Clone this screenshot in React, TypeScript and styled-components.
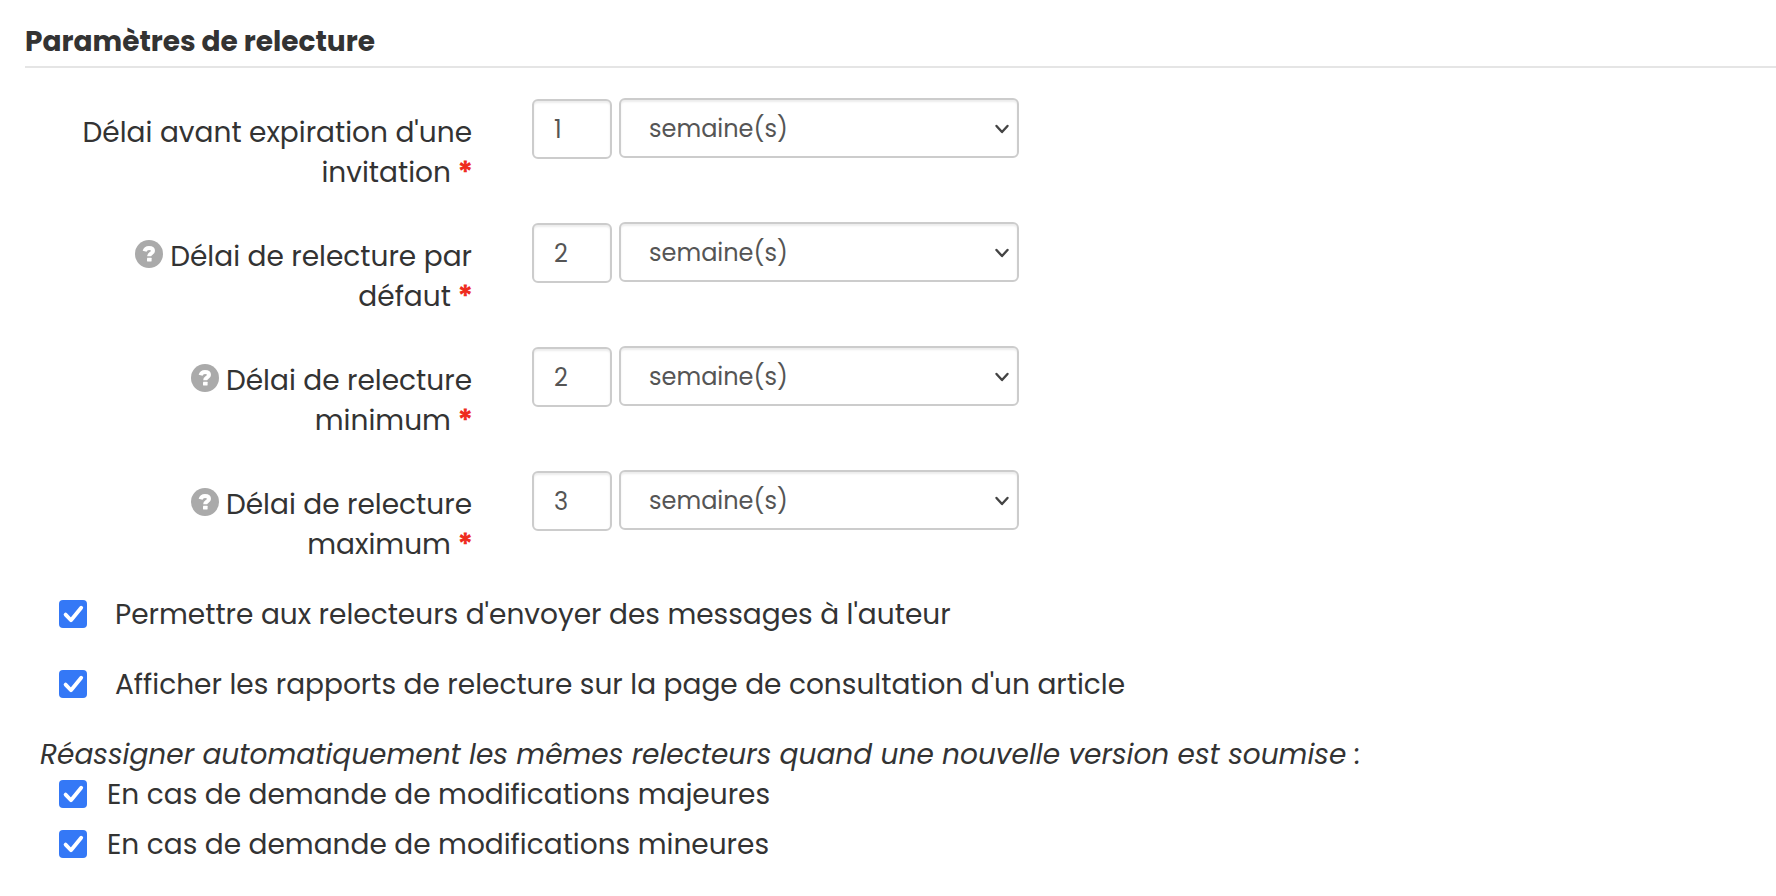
import React from 'react';
import styled, { createGlobalStyle } from 'styled-components';

const GlobalStyle = createGlobalStyle`
  *, *::before, *::after { box-sizing: border-box; }
  body {
    margin: 0;
    background: #fff;
    color: #333;
    font-family: Poppins, Inter, sans-serif;
    font-size: 28px;
    line-height: 40px;
  }
`;

const Form = styled.form`
  padding: 22px 0 0 25px;
`;

const Section = styled.fieldset`
  margin: 0;
  padding: 0;
  border: 0;
  min-width: 0;
`;

const Title = styled.legend`
  display: block;
  width: 100%;
  margin: 0 0 30px;
  padding: 0 0 4px;
  border-bottom: 2px solid #e5e5e5;
  font-weight: 700;
`;

const Delays = styled.div`
  display: grid;
  row-gap: 29px;
  margin-bottom: 30px;
`;

const Row = styled.div`
  display: flex;
  align-items: flex-start;
  gap: 60px;
`;

const RowLabel = styled.label`
  width: 447px;
  padding: 15px 0 0 47px;
  text-align: right;
`;

const KeepTogether = styled.span`
  white-space: nowrap;
`;

const Required = styled.span`
  color: #ee2c1b;
  -webkit-text-stroke: 1px #ee2c1b;
`;

const Help = styled.svg`
  width: 28px;
  height: 28px;
  margin-right: 7px;
  vertical-align: -2px;
`;

const Controls = styled.div`
  display: flex;
  align-items: flex-start;
  gap: 7px;
`;

const fieldStyle = `
  height: 60px;
  margin: 0;
  border: 2px solid #ccc;
  border-radius: 6px;
  background: #fff;
  box-shadow: inset 0 2px 2px rgba(0, 0, 0, 0.075);
  color: #555;
  font-family: inherit;
  font-size: 24px;
  line-height: 40px;
`;

const NumberField = styled.input`
  ${fieldStyle}
  width: 80px;
  margin-top: 1px;
  padding: 0 20px;
`;

const SelectBox = styled.span`
  position: relative;
  display: block;
`;

const UnitSelect = styled.select`
  ${fieldStyle}
  display: block;
  width: 400px;
  padding: 2px 40px 0 28px;
  appearance: none;
`;

const Chevron = styled.svg`
  position: absolute;
  top: 26px;
  right: 9px;
  width: 16px;
  height: 10px;
  pointer-events: none;
`;

const CheckLabel = styled.label<{ $gap: number; $after: number }>`
  display: flex;
  align-items: flex-start;
  gap: ${(p) => p.$gap}px;
  margin: 0 0 ${(p) => p.$after}px 34px;
`;

const Checkbox = styled.input`
  appearance: none;
  flex: none;
  width: 28px;
  height: 28px;
  margin: 5px 0 0;
  border-radius: 4px;
  background: #fff;
  border: 2px solid #b5b5b5;

  &:checked {
    background: #3478f6;
    border: 0;
  }
`;

const CheckWrap = styled.span`
  position: relative;
  display: flex;
`;

const Tick = styled.svg`
  position: absolute;
  left: 0;
  top: 5px;
  width: 28px;
  height: 28px;
  pointer-events: none;

  input:not(:checked) + & { display: none; }
`;

const Note = styled.p`
  margin: 0 0 0 15px;
  font-style: italic;
`;

const delays = [
  { id: 'invitation', label: "Délai avant expiration d'une", last: 'invitation', value: 1, help: false },
  { id: 'default', label: 'Délai de relecture par', last: 'défaut', value: 2, help: true },
  { id: 'minimum', label: 'Délai de relecture', last: 'minimum', value: 2, help: true },
  { id: 'maximum', label: 'Délai de relecture', last: 'maximum', value: 3, help: true },
];

function HelpIcon() {
  return (
    <Help viewBox="0 0 28 28" aria-hidden="true">
      <circle cx="14" cy="14" r="14" fill="#aaa" />
      <path
        d="M9.6 11.2C10.2 9 11.8 8 14 8c2.5 0 4 1.2 4 3 0 2.5-3.8 2.4-3.8 5.2"
        fill="none"
        stroke="#fff"
        strokeWidth="4"
      />
      <rect x="12" y="17.8" width="4.6" height="3.6" rx="0.4" fill="#fff" />
    </Help>
  );
}

function Delay({ id, label, last, value, help }: (typeof delays)[number]) {
  return (
    <Row>
      <RowLabel htmlFor={id}>
        {help && <HelpIcon />}
        <span>{label}</span>{' '}
        <KeepTogether>
          <span>{last}</span> <Required>*</Required>
        </KeepTogether>
      </RowLabel>
      <Controls>
        <NumberField id={id} type="text" inputMode="numeric" defaultValue={value} />
        <SelectBox>
          <UnitSelect aria-label={`${label} ${last}`} defaultValue="week">
            <option value="day">jour(s)</option>
            <option value="week">semaine(s)</option>
            <option value="month">mois</option>
          </UnitSelect>
          <Chevron viewBox="0 0 16 10" aria-hidden="true">
            <path d="M2.5 2L8 8l5.5-6" fill="none" stroke="#444" strokeWidth="2.4" strokeLinecap="round" strokeLinejoin="round" />
          </Chevron>
        </SelectBox>
      </Controls>
    </Row>
  );
}

function Check({ children, gap, after }: { children: React.ReactNode; gap: number; after: number }) {
  return (
    <CheckLabel $gap={gap} $after={after}>
      <CheckWrap>
        <Checkbox type="checkbox" defaultChecked />
        <Tick viewBox="0 0 28 28" aria-hidden="true">
          <path d="M6.6 14.6l5.4 5.6L22.2 7.8" fill="none" stroke="#fff" strokeWidth="3.8" strokeLinecap="round" strokeLinejoin="round" />
        </Tick>
      </CheckWrap>
      <span>{children}</span>
    </CheckLabel>
  );
}

export default function App() {
  return (
    <>
      <GlobalStyle />
      <Form>
        <Section>
          <Title>Paramètres de relecture</Title>
          <Delays>
            {delays.map((d) => (
              <Delay key={d.id} {...d} />
            ))}
          </Delays>
          <Check gap={28} after={30}>Permettre aux relecteurs d'envoyer des messages à l'auteur</Check>
          <Check gap={28} after={30}>Afficher les rapports de relecture sur la page de consultation d'un article</Check>
          <Note>Réassigner automatiquement les mêmes relecteurs quand une nouvelle version est soumise :</Note>
          <Check gap={20} after={10}>En cas de demande de modifications majeures</Check>
          <Check gap={20} after={10}>En cas de demande de modifications mineures</Check>
        </Section>
      </Form>
    </>
  );
}
